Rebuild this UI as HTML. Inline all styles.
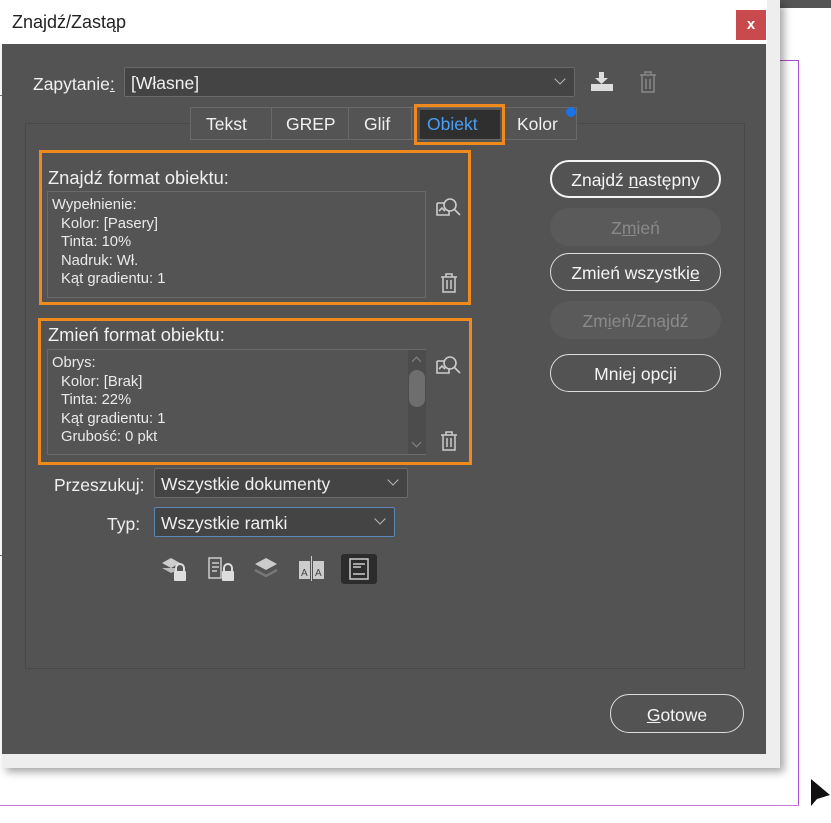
<!DOCTYPE html>
<html><head><meta charset="utf-8"><style>
*{margin:0;padding:0;box-sizing:border-box}
body{width:831px;height:823px;background:#fff;position:relative;overflow:hidden;font-family:"Liberation Sans","DejaVu Sans",sans-serif;color:#f0f0f0}
.a{position:absolute}
.t{font-size:17.5px;white-space:nowrap}
.btn{position:absolute;border:1.5px solid #ddd;border-radius:19px;text-align:center;font-size:17.5px;color:#f4f4f4}
.dis{position:absolute;background:#5a5a5a;border-radius:19px;text-align:center;font-size:17.5px;color:#8a8a8a}
.obox{position:absolute;border:3px solid #f08a1c}
.list{position:absolute;border:1px solid #6a6a6a;font-size:14.8px;line-height:18.5px;color:#eaeaea;padding:4px 0 0 2px;background:#545454;white-space:nowrap}
.list div{padding-left:11px}
.list div.h{padding-left:2px}
.sel{position:absolute;background:#444;border:1px solid #6a6a6a;border-radius:2px;font-size:17.5px;color:#f0f0f0;padding-left:6px;white-space:nowrap}
.chev{position:absolute;right:10px;top:7px;width:8px;height:8px;border-right:1.3px solid #bbb;border-bottom:1.3px solid #bbb;transform:rotate(45deg)}
</style></head><body>
<div class="a" style="left:767px;top:0;width:64px;height:8px;background:#555"></div>
<div class="a" style="left:767px;top:60px;width:32px;height:1px;background:#a64fd0"></div>
<div class="a" style="left:798px;top:60px;width:1px;height:746px;background:#a64fd0"></div>
<div class="a" style="left:0;top:805px;width:799px;height:1px;background:#c67ad6"></div>
<div class="a" style="left:0;top:95px;width:2px;height:1px;background:#777"></div>
<div class="a" style="left:0;top:555px;width:2px;height:1px;background:#777"></div>
<svg class="a" style="left:810px;top:778px" width="22" height="30"><path d="M1 1 L1 28 L7 21 L20 17 Z" fill="#111"/></svg>
<div class="a" style="left:2px;top:0;width:778px;height:768px;box-shadow:4px 4px 8px rgba(0,0,0,.35);background:#eee"></div>
<div class="a" style="left:0;top:0;width:767px;height:44px;background:#fff"></div>
<div class="a t" style="left:12px;top:12px;color:#222;font-size:18px">Znajdź/Zastąp</div>
<div class="a" style="left:736px;top:10px;width:30px;height:30px;background:#c94a4c;color:#fff;font-size:15px;font-weight:bold;text-align:center;line-height:29px">x</div>
<div class="a" style="left:2px;top:44px;width:764px;height:710px;background:#535353"></div>
<div class="a t" style="left:33px;top:74px">Zapytanie<u>:</u></div>
<div class="sel" style="left:124px;top:67px;width:451px;height:30px;line-height:30px">[Własne]<div class="chev"></div></div>
<svg class="a" style="left:589px;top:70px" width="26" height="24"><path d="M10 2h5v6h4l-6.5 6-6.5-6h4z" fill="#ddd"/><rect x="2" y="14" width="22" height="7" fill="#ddd"/></svg>
<svg class="a" style="left:638px;top:70px" width="20" height="24" fill="none" stroke="#888" stroke-width="1.5"><path d="M2 5h16M7 5V2h6v3M4 5v17h12V5M8 9v10M12 9v10"/></svg>
<div class="a" style="left:25px;top:123px;width:720px;height:546px;border:1px solid #484848"></div>
<div class="a" style="left:190px;top:107px;width:387px;height:33px;background:#545454;border:1px solid #6a6a6a"></div>
<div class="a" style="left:271px;top:108px;width:1px;height:31px;background:#6a6a6a"></div>
<div class="a" style="left:348px;top:108px;width:1px;height:31px;background:#6a6a6a"></div>
<div class="a" style="left:411px;top:108px;width:1px;height:31px;background:#6a6a6a"></div>
<div class="a" style="left:420px;top:110px;width:80px;height:29px;background:#2f2f2f"></div>
<div class="a t" style="left:206px;top:114px">Tekst</div>
<div class="a t" style="left:286px;top:114px">GREP</div>
<div class="a t" style="left:364px;top:114px">Glif</div>
<div class="a t" style="left:427px;top:114px;color:#4a9ff5">Obiekt</div>
<div class="a t" style="left:517px;top:114px">Kolor</div>
<div class="a" style="left:566px;top:107px;width:10px;height:10px;border-radius:50%;background:#1a73e8"></div>
<div class="obox" style="left:414px;top:104px;width:91px;height:41px"></div>
<div class="obox" style="left:39px;top:150px;width:432px;height:155px"></div>
<div class="a t" style="left:48px;top:167px;font-size:18.3px">Znajdź format obiektu:</div>
<div class="list" style="left:47px;top:191px;width:379px;height:107px"><div class="h">Wypełnienie:</div><div>Kolor: [Pasery]</div><div>Tinta: 10%</div><div>Nadruk: Wł.</div><div>Kąt gradientu: 1</div></div>
<div class="obox" style="left:38px;top:318px;width:434px;height:147px"></div>
<div class="a t" style="left:48px;top:324px;font-size:18.3px">Zmień format obiektu:</div>
<div class="list" style="left:47px;top:349px;width:379px;height:106px"><div class="h">Obrys:</div><div>Kolor: [Brak]</div><div>Tinta: 22%</div><div>Kąt gradientu: 1</div><div>Grubość: 0 pkt</div></div>
<div class="a" style="left:408px;top:350px;width:18px;height:104px;background:#4c4c4c"></div>
<div class="a" style="left:409px;top:370px;width:16px;height:37px;background:#6e6e6e;border-radius:8px"></div>
<div class="a" style="left:413px;top:358px;width:7px;height:7px;border-left:1px solid #888;border-top:1px solid #888;transform:rotate(45deg)"></div>
<div class="a" style="left:413px;top:439px;width:7px;height:7px;border-right:1px solid #888;border-bottom:1px solid #888;transform:rotate(45deg)"></div>
<svg class="a" style="left:435px;top:196px" width="28" height="24" fill="none" stroke="#ccc" stroke-width="1.6"><path d="M2 7h7M2 7v12h12v-5"/><circle cx="15" cy="9" r="6"/><path d="M19 13l6 6"/><path d="M4 15l3-3 3 3" /></svg>
<svg class="a" style="left:440px;top:273px" width="18" height="20" fill="none" stroke="#ccc" stroke-width="1.5"><path d="M1 4h16M6 4V1h6v3M3 4v15h12V4M7 7v9M11 7v9"/></svg>
<svg class="a" style="left:435px;top:354px" width="28" height="24" fill="none" stroke="#ccc" stroke-width="1.6"><path d="M2 7h7M2 7v12h12v-5"/><circle cx="15" cy="9" r="6"/><path d="M19 13l6 6"/><path d="M4 15l3-3 3 3"/></svg>
<svg class="a" style="left:440px;top:431px" width="18" height="20" fill="none" stroke="#ccc" stroke-width="1.5"><path d="M1 4h16M6 4V1h6v3M3 4v15h12V4M7 7v9M11 7v9"/></svg>
<div class="a t" style="left:54px;top:475px">Przeszukuj:</div>
<div class="sel" style="left:154px;top:468px;width:254px;height:30px;line-height:30px">Wszystkie dokumenty<div class="chev"></div></div>
<div class="a t" style="left:107px;top:514px">Typ:</div>
<div class="sel" style="left:154px;top:507px;width:241px;height:30px;line-height:30px;border-color:#5a86b8">Wszystkie ramki<div class="chev"></div></div>
<svg class="a" style="left:160px;top:556px" width="30" height="26"><path d="M2 7l9-5 9 5-9 5z" fill="#ccc"/><path d="M2 12l9 5 5-2v-3" fill="#bbb"/><rect x="14" y="15" width="12" height="10" rx="1" fill="#ddd"/><path d="M16 15v-3a4 4 0 0 1 8 0v3" stroke="#ddd" stroke-width="2" fill="none"/></svg>
<svg class="a" style="left:207px;top:556px" width="30" height="26"><path d="M2 2h12v20H2z" fill="none" stroke="#ccc" stroke-width="1.5"/><path d="M5 7h7M5 11h7M5 15h5" stroke="#ccc" stroke-width="1.5"/><rect x="15" y="15" width="12" height="10" rx="1" fill="#ddd"/><path d="M17 15v-3a4 4 0 0 1 8 0v3" stroke="#ddd" stroke-width="2" fill="none"/></svg>
<svg class="a" style="left:253px;top:556px" width="28" height="24"><path d="M2 8l11-6 11 6-11 6z" fill="#ccc"/><path d="M2 14l11 6 11-6" fill="none" stroke="#777" stroke-width="2.5"/></svg>
<svg class="a" style="left:297px;top:555px" width="30" height="26"><path d="M2 6h11v18H2zM16 6h11v18H16z" fill="#ccc"/><path d="M14.5 1v25" stroke="#ccc"/><text x="4" y="21" font-size="10" fill="#444" font-family="Liberation Sans">A</text><text x="18" y="21" font-size="10" fill="#444" font-family="Liberation Sans">A</text></svg>
<div class="a" style="left:341px;top:554px;width:36px;height:30px;background:#2c2c2c;border-radius:3px"></div>
<svg class="a" style="left:349px;top:558px" width="20" height="22"><rect x="1" y="1" width="18" height="20" fill="none" stroke="#ccc" stroke-width="1.5"/><path d="M4 6h12M4 9h8M4 16h12" stroke="#ccc" stroke-width="1.5"/></svg>
<div class="btn" style="left:550px;top:160px;width:171px;height:38px;border:2.5px solid #f4f4f4;line-height:37px">Znajdź <u>n</u>astępny</div>
<div class="dis" style="left:550px;top:208px;width:171px;height:38px;line-height:40px">Z<u>m</u>ień</div>
<div class="btn" style="left:550px;top:253px;width:171px;height:38px;line-height:38px">Zmień wszystki<u>e</u></div>
<div class="dis" style="left:550px;top:301px;width:171px;height:38px;line-height:40px">Zm<u>i</u>eń/Znajdź</div>
<div class="btn" style="left:550px;top:354px;width:171px;height:38px;line-height:38px">Mnie<u>j</u> opcji</div>
<div class="btn" style="left:610px;top:694px;width:134px;height:39px;line-height:40px;border-width:1px"><u>G</u>otowe</div>
</body></html>
